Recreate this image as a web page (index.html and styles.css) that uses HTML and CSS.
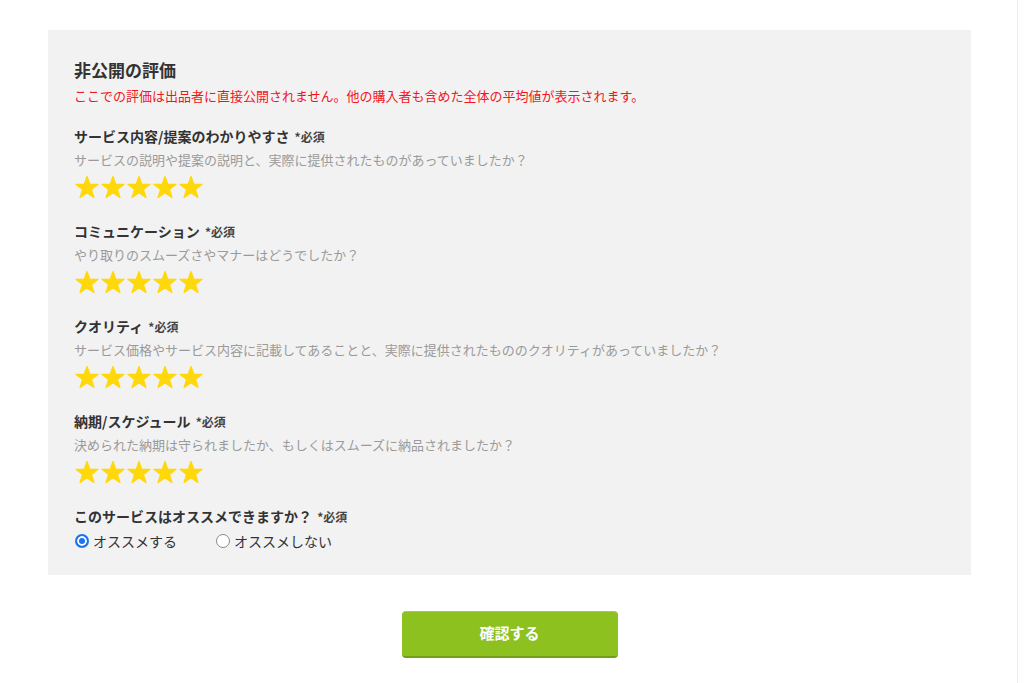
FILE: index.html
```html
<!DOCTYPE html>
<html lang="ja">
<head>
<meta charset="utf-8">
<link rel="stylesheet" href="styles.css">
</head>
<body>
<div class="page">
  <section class="panel">
    <h2 class="title">非公開の評価</h2>
    <p class="notice">ここでの評価は出品者に直接公開されません。他の購入者も含めた全体の平均値が表示されます。</p>

    <div class="item">
      <div class="label">サービス内容/提案のわかりやすさ <span class="req">*必須</span></div>
      <div class="desc">サービスの説明や提案の説明と、実際に提供されたものがあっていましたか？</div>
      <div class="stars">
        <svg viewBox="0 0 26 25"><path d="M13 1.2L15.95 9.6H25L17.77 15.2 20.5 23.9 13 18.7 5.5 23.9 8.23 15.2 1 9.6H10.05Z"/></svg>
        <svg viewBox="0 0 26 25"><path d="M13 1.2L15.95 9.6H25L17.77 15.2 20.5 23.9 13 18.7 5.5 23.9 8.23 15.2 1 9.6H10.05Z"/></svg>
        <svg viewBox="0 0 26 25"><path d="M13 1.2L15.95 9.6H25L17.77 15.2 20.5 23.9 13 18.7 5.5 23.9 8.23 15.2 1 9.6H10.05Z"/></svg>
        <svg viewBox="0 0 26 25"><path d="M13 1.2L15.95 9.6H25L17.77 15.2 20.5 23.9 13 18.7 5.5 23.9 8.23 15.2 1 9.6H10.05Z"/></svg>
        <svg viewBox="0 0 26 25"><path d="M13 1.2L15.95 9.6H25L17.77 15.2 20.5 23.9 13 18.7 5.5 23.9 8.23 15.2 1 9.6H10.05Z"/></svg>
      </div>
    </div>

    <div class="item">
      <div class="label">コミュニケーション <span class="req">*必須</span></div>
      <div class="desc">やり取りのスムーズさやマナーはどうでしたか？</div>
      <div class="stars">
        <svg viewBox="0 0 26 25"><path d="M13 1.2L15.95 9.6H25L17.77 15.2 20.5 23.9 13 18.7 5.5 23.9 8.23 15.2 1 9.6H10.05Z"/></svg>
        <svg viewBox="0 0 26 25"><path d="M13 1.2L15.95 9.6H25L17.77 15.2 20.5 23.9 13 18.7 5.5 23.9 8.23 15.2 1 9.6H10.05Z"/></svg>
        <svg viewBox="0 0 26 25"><path d="M13 1.2L15.95 9.6H25L17.77 15.2 20.5 23.9 13 18.7 5.5 23.9 8.23 15.2 1 9.6H10.05Z"/></svg>
        <svg viewBox="0 0 26 25"><path d="M13 1.2L15.95 9.6H25L17.77 15.2 20.5 23.9 13 18.7 5.5 23.9 8.23 15.2 1 9.6H10.05Z"/></svg>
        <svg viewBox="0 0 26 25"><path d="M13 1.2L15.95 9.6H25L17.77 15.2 20.5 23.9 13 18.7 5.5 23.9 8.23 15.2 1 9.6H10.05Z"/></svg>
      </div>
    </div>

    <div class="item">
      <div class="label">クオリティ <span class="req">*必須</span></div>
      <div class="desc">サービス価格やサービス内容に記載してあることと、実際に提供されたもののクオリティがあっていましたか？</div>
      <div class="stars">
        <svg viewBox="0 0 26 25"><path d="M13 1.2L15.95 9.6H25L17.77 15.2 20.5 23.9 13 18.7 5.5 23.9 8.23 15.2 1 9.6H10.05Z"/></svg>
        <svg viewBox="0 0 26 25"><path d="M13 1.2L15.95 9.6H25L17.77 15.2 20.5 23.9 13 18.7 5.5 23.9 8.23 15.2 1 9.6H10.05Z"/></svg>
        <svg viewBox="0 0 26 25"><path d="M13 1.2L15.95 9.6H25L17.77 15.2 20.5 23.9 13 18.7 5.5 23.9 8.23 15.2 1 9.6H10.05Z"/></svg>
        <svg viewBox="0 0 26 25"><path d="M13 1.2L15.95 9.6H25L17.77 15.2 20.5 23.9 13 18.7 5.5 23.9 8.23 15.2 1 9.6H10.05Z"/></svg>
        <svg viewBox="0 0 26 25"><path d="M13 1.2L15.95 9.6H25L17.77 15.2 20.5 23.9 13 18.7 5.5 23.9 8.23 15.2 1 9.6H10.05Z"/></svg>
      </div>
    </div>

    <div class="item">
      <div class="label">納期/スケジュール <span class="req">*必須</span></div>
      <div class="desc">決められた納期は守られましたか、もしくはスムーズに納品されましたか？</div>
      <div class="stars">
        <svg viewBox="0 0 26 25"><path d="M13 1.2L15.95 9.6H25L17.77 15.2 20.5 23.9 13 18.7 5.5 23.9 8.23 15.2 1 9.6H10.05Z"/></svg>
        <svg viewBox="0 0 26 25"><path d="M13 1.2L15.95 9.6H25L17.77 15.2 20.5 23.9 13 18.7 5.5 23.9 8.23 15.2 1 9.6H10.05Z"/></svg>
        <svg viewBox="0 0 26 25"><path d="M13 1.2L15.95 9.6H25L17.77 15.2 20.5 23.9 13 18.7 5.5 23.9 8.23 15.2 1 9.6H10.05Z"/></svg>
        <svg viewBox="0 0 26 25"><path d="M13 1.2L15.95 9.6H25L17.77 15.2 20.5 23.9 13 18.7 5.5 23.9 8.23 15.2 1 9.6H10.05Z"/></svg>
        <svg viewBox="0 0 26 25"><path d="M13 1.2L15.95 9.6H25L17.77 15.2 20.5 23.9 13 18.7 5.5 23.9 8.23 15.2 1 9.6H10.05Z"/></svg>
      </div>
    </div>

    <div class="item">
      <div class="label">このサービスはオススメできますか？ <span class="req">*必須</span></div>
      <div class="radios">
        <label class="radio"><input type="radio" name="rec" checked>オススメする</label>
        <label class="radio"><input type="radio" name="rec">オススメしない</label>
      </div>
    </div>
  </section>

  <div class="actions">
    <button class="confirm" type="button">確認する</button>
  </div>
</div>
</body>
</html>
```

FILE: styles.css
```css
* { box-sizing: border-box; }
html, body { margin: 0; padding: 0; background: #fff; }
body {
  font-family: "Noto Sans CJK JP", "Noto Sans", sans-serif;
  color: #333;
}
.page {
  width: 1018px;
  height: 683px;
  border-right: 1px solid #ececec;
  padding: 30px 0 0 48px;
}
.panel {
  width: 923px;
  height: 545px;
  background: #f2f2f2;
  padding: 27px 26px 0 26px;
}
.title {
  margin: 0;
  font-size: 17px;
  line-height: 26px;
  font-weight: bold;
  color: #333;
}
.notice {
  margin: 4px 0 0 0;
  font-size: 13px;
  line-height: 18px;
  color: #f5141c;
}
.item { margin-top: 20px; }
.item + .item { margin-top: 19px; }
.label {
  font-size: 14px;
  font-weight: bold;
  line-height: 22px;
  color: #333;
}
.req {
  font-size: 12px;
  font-weight: bold;
  color: #444;
  margin-left: 2px;
}
.desc {
  font-size: 13px;
  line-height: 24px;
  color: #9a9a9a;
}
.stars {
  display: flex;
  gap: 2px;
  margin-top: 3px;
  height: 26px;
  padding-left: 1px;
}
.stars svg {
  width: 24px;
  height: 24px;
  fill: #ffd80c;
  stroke: #ffd80c;
  stroke-width: 1.4;
  stroke-linejoin: round;
}
.radios {
  display: flex;
  gap: 38px;
  height: 26px;
}
.radio {
  display: flex;
  align-items: center;
  font-size: 14px;
  line-height: 26px;
  color: #333;
}
.radio input {
  appearance: none;
  -webkit-appearance: none;
  margin: 0 4px 0 1px;
  width: 14px;
  height: 14px;
  border-radius: 50%;
  border: 1px solid #8a8a8a;
  background: #fff;
}
.radio input:checked {
  border: 2px solid #1a73f0;
  background: #1a73f0;
  box-shadow: inset 0 0 0 2px #fff;
}
.actions {
  display: flex;
  justify-content: center;
  padding-top: 36px;
  padding-right: 48px;
}
.confirm {
  width: 216px;
  height: 47px;
  background: #8cc11f;
  border: none;
  border-bottom: 2px solid #72a017;
  border-top: 1px solid #a3d140;
  border-radius: 4px;
  color: #fff;
  font-family: "Noto Sans CJK JP", sans-serif;
  font-size: 15px;
  font-weight: bold;
  margin-left: 2px;
  padding: 0 0 3px 0;
}
```
